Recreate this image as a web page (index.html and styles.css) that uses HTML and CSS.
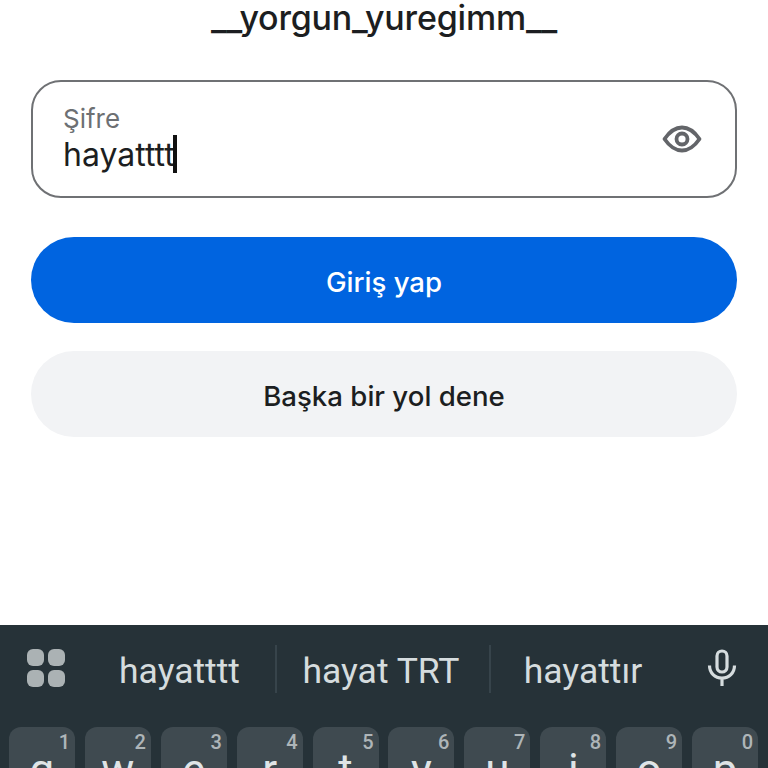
FILE: index.html
```html
<!DOCTYPE html>
<html lang="tr">
<head>
<meta charset="utf-8">
<title>Giriş yap</title>
<link rel="stylesheet" href="styles.css">
</head>
<body>
<main class="screen">
  <section class="form">
    <h1 class="user">__yorgun_yuregimm__</h1>
    <div class="field">
      <div class="field-text">
        <div class="label">Şifre</div>
        <div class="value"><span>hayatttt</span><span class="caret"></span></div>
      </div>
      <svg class="eye" viewBox="0 0 40 28" width="40" height="28" aria-hidden="true">
        <path d="M2.500 14C8 6 13 2.500 20 2.500S32 6 37.500 14C32 22 27 25.500 20 25.500S8 22 2.500 14Z" fill="none" stroke="#636569" stroke-width="3.800" stroke-linejoin="round"/>
        <circle cx="20" cy="14" r="5.500" fill="none" stroke="#636569" stroke-width="3.800"/>
      </svg>
    </div>
    <button class="btn primary">Giriş yap</button>
    <button class="btn secondary">Başka bir yol dene</button>
  </section>
  <section class="keyboard">
    <div class="suggestions">
      <svg class="apps" viewBox="0 0 38 38" width="38" height="38" aria-hidden="true">
        <rect x="0" y="0" width="17" height="17" rx="6" fill="#abb2b4"/>
        <rect x="21" y="0" width="17" height="17" rx="6" fill="#abb2b4"/>
        <rect x="0" y="21" width="17" height="17" rx="6" fill="#abb2b4"/>
        <rect x="21" y="21" width="17" height="17" rx="6" fill="#abb2b4"/>
      </svg>
      <div class="words">
        <span class="word">hayatttt</span>
        <span class="word">hayat TRT</span>
        <span class="word">hayattır</span>
      </div>
      <svg class="mic" viewBox="0 0 30 38" width="30" height="38" aria-hidden="true">
        <rect x="10" y="2" width="10" height="21" rx="5" fill="none" stroke="#d5dcde" stroke-width="3.200"/>
        <path d="M2.500 16.500C2.500 24 8 29 15 29s12.500-5 12.500-12.500M15 29v8" fill="none" stroke="#d5dcde" stroke-width="3.200"/>
      </svg>
    </div>
    <div class="keys">
      <div class="key"><sup class="num">1</sup><span class="letter">q</span></div>
      <div class="key"><sup class="num">2</sup><span class="letter">w</span></div>
      <div class="key"><sup class="num">3</sup><span class="letter">e</span></div>
      <div class="key"><sup class="num">4</sup><span class="letter">r</span></div>
      <div class="key"><sup class="num">5</sup><span class="letter">t</span></div>
      <div class="key"><sup class="num">6</sup><span class="letter">y</span></div>
      <div class="key"><sup class="num">7</sup><span class="letter">u</span></div>
      <div class="key"><sup class="num">8</sup><span class="letter">i</span></div>
      <div class="key"><sup class="num">9</sup><span class="letter">o</span></div>
      <div class="key"><sup class="num">0</sup><span class="letter">p</span></div>
    </div>
  </section>
</main>
</body>
</html>
```

FILE: styles.css
```css
html, body {
  margin: 0;
  padding: 0;
  height: 100%;
  overflow: hidden;
  background: #fff;
}
.screen {
  width: 768px;
  height: 768px;
  display: flex;
  flex-direction: column;
  overflow: hidden;
  font-family: Inter, "Noto Sans", sans-serif;
}
.form {
  height: 625px;
  box-sizing: border-box;
  padding: 0 31px;
  display: flex;
  flex-direction: column;
  flex-shrink: 0;
}
.user {
  margin: 0;
  height: 80px;
  box-sizing: border-box;
  font-size: 34px;
  line-height: 36px;
  font-weight: 500;
  letter-spacing: -0.2px;
  text-align: center;
  color: #1c1e21;
}
.field {
  height: 118px;
  box-sizing: border-box;
  border: 2px solid #6f7174;
  border-radius: 30px;
  padding: 0 33px 0 30px;
  display: flex;
  align-items: center;
  justify-content: space-between;
}
.field-text {
  margin-top: 3px;
}
.label {
  font-size: 26px;
  line-height: 30px;
  margin-top: -3px;
  color: #6d7073;
}
.value {
  display: flex;
  align-items: center;
  font-size: 32px;
  line-height: 38px;
  margin-top: 2px;
  color: #1c1e21;
}
.caret {
  width: 4px;
  height: 38px;
  margin: -2px 0 0 -2px;
  background: #111;
}
.btn {
  width: 100%;
  height: 86px;
  border: 0;
  border-radius: 43px;
  padding: 3px 0 0;
  font-family: inherit;
  font-size: 27.600px;
  font-weight: 500;
  flex-shrink: 0;
}
.primary {
  margin-top: 39px;
  background: #0064e0;
  color: #fff;
}
.secondary {
  margin-top: 28px;
  background: #f2f3f5;
  color: #1c1e21;
}
.keyboard {
  flex: 1;
  background: #263238;
  overflow: hidden;
}
.suggestions {
  height: 102px;
  box-sizing: border-box;
  padding: 24px 30px 0 27px;
  display: flex;
  align-items: flex-start;
}
.apps {
  flex-shrink: 0;
}
.words {
  display: flex;
  margin-top: -4px;
  margin-left: 19px;
}
.word {
  height: 48px;
  font-family: Roboto, sans-serif;
  font-size: 35.500px;
  line-height: 52px;
  color: #d5dcde;
  text-align: center;
  border-left: 2px solid #37444b;
  box-sizing: border-box;
}
.word:nth-child(1) { width: 191px; border-left: 0; }
.word:nth-child(2) { width: 214px; padding-right: 4px; }
.word:nth-child(3) { width: 188px; padding-right: 2px; }
.mic {
  flex-shrink: 0;
  margin-left: auto;
  margin-right: 1px;
}
.keys {
  display: flex;
  gap: 9.900px;
  padding: 0 9px;
}
.key {
  position: relative;
  width: 66px;
  height: 90px;
  flex-shrink: 0;
  border-radius: 12px;
  background: #3f4a50;
  text-align: center;
}
.num {
  position: absolute;
  top: 5px;
  right: 5px;
  font-family: Roboto, sans-serif;
  font-size: 20px;
  font-weight: 500;
  line-height: 20px;
  color: #aeb5b8;
  vertical-align: baseline;
}
.letter {
  font-family: Roboto, sans-serif;
  font-size: 44px;
  line-height: 60px;
  color: #dfe4e6;
  display: block;
  padding-top: 13px;
}
```
